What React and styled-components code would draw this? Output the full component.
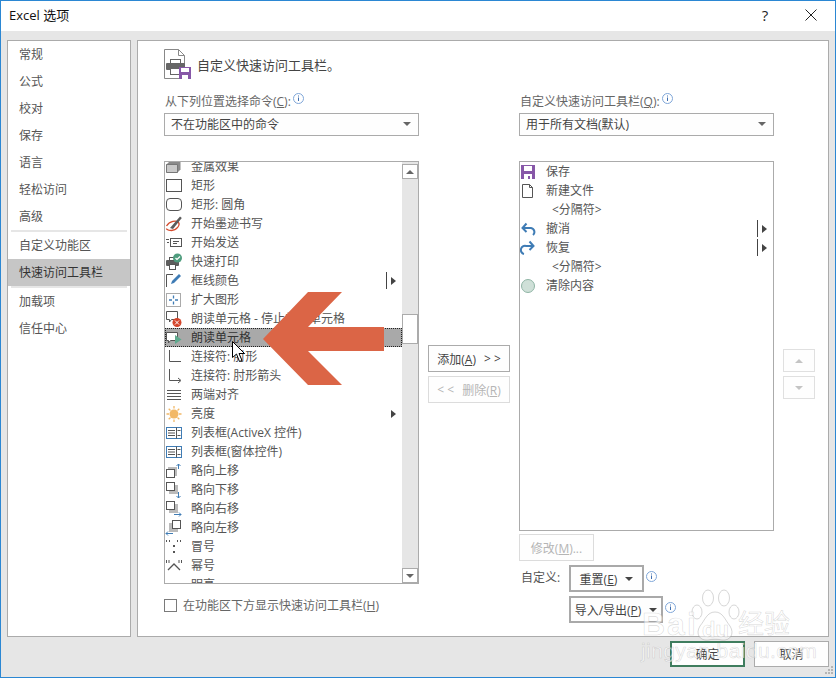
import React from "react";
import styled, { createGlobalStyle } from "styled-components";

const GlobalStyle = createGlobalStyle`
  html, body {
    margin: 0;
    padding: 0;
    background: #e6e6e6;
  }
  * {
    box-sizing: border-box;
  }
`;

const FONT = `"Open Sans", "Noto Sans CJK SC", sans-serif`;

const Dialog = styled.div`
  position: relative;
  width: 836px;
  height: 678px;
  overflow: hidden;
  display: flex;
  flex-direction: column;
  background: #e6e6e6;
  border: 1px solid #2b87d3;
  font-family: ${FONT};
  font-size: 12px;
  color: #444;
`;

const TitleBar = styled.div`
  height: 30px;
  flex: none;
  display: flex;
  align-items: center;
  background: #fff;
  padding: 0 0 3px 8px;
  font-size: 13px;
  color: #111;
`;

const TitleText = styled.div`
  flex: 1;
`;

const HelpButton = styled.div`
  width: 46px;
  text-align: center;
  font-size: 15px;
  color: #222;
`;

const CloseButton = styled.div`
  width: 46px;
  margin-right: 1px;
  display: flex;
  justify-content: center;
`;

const Body = styled.div`
  display: flex;
  gap: 6px;
  padding: 9px 0 0 6px;
`;

const Sidebar = styled.div`
  width: 124px;
  height: 597px;
  background: #fff;
  border: 1px solid #ababab;
`;

const NavItem = styled.div`
  height: 27px;
  line-height: 27px;
  padding-left: 11px;
  background: ${(p) => (p.$active ? "#c6c6c6" : "transparent")};
  color: ${(p) => (p.$active ? "#333" : "#555")};
`;

const NavRule = styled.div`
  height: 2px;
  margin: 0 3px;
  background: #e6e6e6;
`;

const Panel = styled.div`
  width: 692px;
  height: 597px;
  background: #fff;
  border: 1px solid #ababab;
  padding: 8px 0 0 26px;
`;

const Heading = styled.div`
  height: 31px;
  display: flex;
  align-items: center;
  gap: 6px;
  font-size: 13px;
  color: #444;
`;

const Columns = styled.div`
  display: flex;
  margin-top: 13px;
`;

const Column = styled.div`
  width: 255px;
  flex: none;
`;

const LabelRow = styled.div`
  height: 17px;
  line-height: 17px;
  display: flex;
  padding-left: 1px;
  color: #666;
`;

const Mnemonic = styled.span`
  text-decoration: underline;
  text-underline-offset: 1px;
`;

const InfoMark = styled.svg`
  width: 11px;
  height: 11px;
  flex: none;
  margin: ${(p) => p.$margin || "0 0 0 2px"};
`;

const Select = styled.div`
  height: 23px;
  margin-top: 3px;
  display: flex;
  align-items: center;
  justify-content: space-between;
  padding: 0 7px 1px 6px;
  background: #fefefe;
  border: 1px solid #ababab;
  color: #444;
`;

const Caret = styled.span`
  width: 0;
  height: 0;
  flex: none;
  border-left: 4px solid transparent;
  border-right: 4px solid transparent;
  border-top: 4px solid ${(p) => p.$color || "#666"};
  border-bottom: 0;
`;

const FlipCaret = styled.span`
  width: 0;
  height: 0;
  flex: none;
  border-left: 4px solid transparent;
  border-right: 4px solid transparent;
  border-bottom: 4px solid ${(p) => p.$color || "#666"};
`;

const ListBox = styled.div`
  height: ${(p) => p.$height}px;
  margin-top: 25px;
  display: flex;
  overflow: hidden;
  background: #fff;
  border: 1px solid #ababab;
`;

const ListRows = styled.div`
  flex: 1;
  min-width: 0;
  overflow: hidden;
`;

const ScrolledRows = styled.div`
  margin-top: -5px;
`;

const Row = styled.div`
  height: 19px;
  display: flex;
  align-items: center;
  padding-right: 6px;
  background: ${(p) => (p.$selected ? "#a9a9a9" : "transparent")};
  outline: ${(p) => (p.$selected ? "1px dotted #222" : "none")};
  outline-offset: -1px;
  color: ${(p) => (p.$selected ? "#333" : "#555")};
`;

const RowIcon = styled.span`
  width: 26px;
  height: 19px;
  flex: none;
  display: flex;
  align-items: center;
`;

const RowText = styled.span`
  flex: 1;
  white-space: nowrap;
  line-height: 19px;
  padding-left: ${(p) => (p.$separator ? "6px" : "0")};
`;

const SubMenu = styled.span`
  width: 10px;
  height: 17px;
  flex: none;
  display: flex;
  align-items: center;
  justify-content: flex-end;
  border-left: ${(p) => (p.$split ? "1px solid #444" : "1px solid transparent")};
`;

const SubMenuArrow = styled.span`
  width: 0;
  height: 0;
  border-top: 4px solid transparent;
  border-bottom: 4px solid transparent;
  border-left: 5px solid #444;
`;

const ScrollBar = styled.div`
  width: 16px;
  flex: none;
  display: flex;
  flex-direction: column;
  padding-top: 2px;
  background: #e6e6e6;
`;

const ScrollButton = styled.div`
  width: 16px;
  height: 15px;
  flex: none;
  display: flex;
  align-items: center;
  justify-content: center;
  background: #fff;
  border: 1px solid #ababab;
`;

const ScrollTrack = styled.div`
  flex: 1;
  padding-top: 135px;
`;

const ScrollThumb = styled.div`
  height: 30px;
  background: #fff;
  border: 1px solid #ababab;
`;

const ShowBelow = styled.div`
  display: flex;
  align-items: center;
  gap: 6px;
  margin-top: 12px;
  color: #666;
`;

const CheckBox = styled.span`
  width: 13px;
  height: 13px;
  flex: none;
  background: #fff;
  border: 1px solid #7a7a7a;
`;

const MoveColumn = styled.div`
  width: 100px;
  flex: none;
  padding: 252px 0 0 9px;
  display: flex;
  flex-direction: column;
  gap: 4px;
`;

const Button = styled.div`
  width: ${(p) => p.$width}px;
  height: ${(p) => p.$height || 27}px;
  flex: none;
  display: flex;
  align-items: center;
  justify-content: center;
  gap: 8px;
  white-space: nowrap;
  background: #fefefe;
  border: ${(p) => p.$border || 1}px solid ${(p) => p.$color || "#ababab"};
  color: ${(p) => (p.$disabled ? "#b5b5b5" : "#444")};
`;

const OrderColumn = styled.div`
  width: 32px;
  flex: none;
  margin-left: 9px;
  padding-top: 256px;
  display: flex;
  flex-direction: column;
  gap: 4px;
`;

const EditButton = styled(Button)`
  margin-top: 3px;
`;

const CustomRow = styled.div`
  display: flex;
  align-items: flex-start;
  margin-top: 4px;
  padding-left: ${(p) => p.$indent || 0}px;
`;

const CustomLabel = styled.div`
  width: 50px;
  padding-left: 2px;
  line-height: 26px;
  color: #555;
`;

const Footer = styled.div`
  display: flex;
  justify-content: flex-end;
  gap: 9px;
  padding: 4px 6px 0 0;
`;

const Grip = styled.svg`
  position: absolute;
  right: 1px;
  bottom: 1px;
`;

const Overlay = styled.svg`
  position: absolute;
  left: ${(p) => p.$x}px;
  top: ${(p) => p.$y}px;
  pointer-events: none;
`;

const Watermark = styled.div`
  position: absolute;
  left: 639px;
  top: 587px;
  width: 190px;
  height: 76px;
  pointer-events: none;
  color: rgba(255, 255, 255, 0.6);
  -webkit-text-stroke: 0.6px rgba(120, 120, 120, 0.28);
  font-family: "Liberation Sans", "Noto Sans CJK SC", sans-serif;
`;

const WatermarkBai = styled.span`
  position: absolute;
  left: 2px;
  top: 18px;
  font-size: 32px;
  font-weight: 700;
  line-height: 36px;
  letter-spacing: 2px;
`;

const WatermarkDu = styled.span`
  position: absolute;
  left: 62px;
  top: 30px;
  font-size: 22px;
  font-weight: 700;
  line-height: 24px;
`;

const WatermarkCn = styled.span`
  position: absolute;
  left: 98px;
  top: 21px;
  font-size: 26px;
  line-height: 30px;
`;

const WatermarkUrl = styled.span`
  position: absolute;
  left: 1px;
  top: 52px;
  font-size: 21px;
  line-height: 22px;
  letter-spacing: 0.4px;
  white-space: nowrap;
`;

const Ico = ({ children, w = 18, h = 18 }) => (
  <svg width={w} height={h} viewBox={`0 0 ${w} ${h}`} fill="none">
    {children}
  </svg>
);

const BLUE = "#3f7cb5";
const GREY = "#555";

const icons = {
  metal: (
    <Ico>
      <path d="M1.500 6.500l3-3h11v8l-3 3h-11z" fill="#8a8a8a" />
      <path d="M1.500 6.500h11v8h-11z" fill="#c9c9c9" stroke="#777" />
    </Ico>
  ),
  rect: (
    <Ico>
      <rect x="1.500" y="2.500" width="15" height="12" stroke={GREY} />
    </Ico>
  ),
  round: (
    <Ico>
      <rect x="1.500" y="2.500" width="15" height="12" rx="3.500" stroke={GREY} />
    </Ico>
  ),
  ink: (
    <Ico>
      <path d="M1.500 11c3-5 10-6 12-3.500s-2 8-7 8-5-2-5-2" stroke="#d4492b" strokeWidth="1.300" />
      <path d="M5 13L15 1.500l1.800 1.500L8 14z" fill="#5b5b5b" />
    </Ico>
  ),
  send: (
    <Ico>
      <rect x="5.500" y="4.500" width="11" height="8" stroke={GREY} />
      <path d="M1 5.500h3M2 8.500h2M8 7.500h6M8 9.500h4" stroke={GREY} />
    </Ico>
  ),
  print: (
    <Ico>
      <rect x="1" y="7" width="13" height="6" rx="1" fill="#5d5d5d" />
      <rect x="4.500" y="4.500" width="6" height="3" fill="#fff" stroke={GREY} />
      <rect x="4.500" y="11.500" width="6" height="5" fill="#fff" stroke={GREY} />
      <circle cx="12.500" cy="5" r="4.500" fill="#4f9d7e" />
      <path d="M10.500 5l1.500 1.500L15 3.500" stroke="#fff" strokeWidth="1.200" />
    </Ico>
  ),
  border: (
    <Ico>
      <path d="M1.500 15V2.500H8" stroke={GREY} />
      <path d="M6 12l1-3 7-7 2 2-7 7z" fill={BLUE} />
    </Ico>
  ),
  expand: (
    <Ico>
      <rect x="1.500" y="2.500" width="14" height="13" stroke={GREY} strokeDasharray="1 1" />
      <path d="M8.500 4.500v3M8.500 10.500v3M4 9h3M10 9h3" stroke={BLUE} strokeWidth="1.300" />
    </Ico>
  ),
  speakStop: (
    <Ico>
      <path d="M1.500 1.500h11v8h-6l-2 2.500v-2.500h-3z" stroke={GREY} fill="#fff" />
      <circle cx="12" cy="12.500" r="4.500" fill="#d4452b" />
      <path d="M10 10.500l4 4M14 10.500l-4 4" stroke="#fff" />
    </Ico>
  ),
  speak: (
    <Ico>
      <path d="M1.500 3.500h11v8h-7l-2 2.500v-2.500h-2z" stroke={GREY} fill="#fff" />
      <path d="M10 6l6.500 4.500L10 15z" fill="#5da98d" />
    </Ico>
  ),
  elbow: (
    <Ico>
      <path d="M4.500 2v11.500H16" stroke={GREY} />
    </Ico>
  ),
  elbowArrow: (
    <Ico>
      <path d="M4.500 2v11.500H15" stroke={GREY} />
      <path d="M13 11l3 2.500-3 2.500" stroke={GREY} />
    </Ico>
  ),
  justify: (
    <Ico>
      <path d="M2 4.500h14M2 7.500h14M2 10.500h14M2 13.500h14" stroke={GREY} />
    </Ico>
  ),
  sun: (
    <Ico>
      <circle cx="9" cy="9" r="4.500" fill="#f2b866" />
      <path
        d="M9 1v2.500M9 14.500V17M1.500 9H4M14 9h2.500M3.700 3.700l1.800 1.800M12.500 12.500l1.800 1.800M3.700 14.300l1.800-1.800M12.500 5.500l1.800-1.800"
        stroke="#f2b866"
        strokeWidth="1.300"
      />
    </Ico>
  ),
  listbox: (
    <Ico>
      <rect x="1.500" y="3.500" width="15" height="11" stroke={BLUE} />
      <path d="M11.500 3.500v11M3 6.500h7M3 9h7M3 11.500h7M12.500 6.500h3M12.500 11.500h3" stroke={GREY} />
    </Ico>
  ),
  nudgeUp: (
    <Ico>
      <rect x="3" y="5" width="9" height="9" fill="#bbb" />
      <rect x="1.500" y="7.500" width="8" height="8" fill="#fff" stroke={GREY} />
      <path d="M13.500 7V2M11.500 4l2-2 2 2" stroke={BLUE} />
    </Ico>
  ),
  nudgeDown: (
    <Ico>
      <rect x="4" y="4" width="9" height="9" fill="#bbb" />
      <rect x="1.500" y="1.500" width="8" height="8" fill="#fff" stroke={GREY} />
      <path d="M13.500 11v6M11.500 15l2 2 2-2" stroke={BLUE} />
    </Ico>
  ),
  nudgeRight: (
    <Ico>
      <rect x="4" y="4" width="9" height="9" fill="#bbb" />
      <rect x="1.500" y="1.500" width="8" height="8" fill="#fff" stroke={GREY} />
      <path d="M9 14.500h7M14 12.500l2 2-2 2" stroke={BLUE} />
    </Ico>
  ),
  nudgeLeft: (
    <Ico>
      <rect x="4" y="4" width="9" height="9" fill="#bbb" />
      <rect x="7.500" y="1.500" width="8" height="8" fill="#fff" stroke={GREY} />
      <path d="M1 14.500h7M3 12.500l-2 2 2 2" stroke={BLUE} />
    </Ico>
  ),
  colon: (
    <Ico>
      <path d="M1 3h2M4 3h2M12 3h2M15 3h2" stroke={GREY} strokeWidth="2" strokeDasharray="1 1" />
      <rect x="8" y="7" width="2" height="2" fill={GREY} />
      <rect x="8" y="13" width="2" height="2" fill={GREY} />
    </Ico>
  ),
  caret: (
    <Ico>
      <path d="M3 13l6-6 6 6" stroke={GREY} strokeWidth="1.300" />
      <path d="M1.500 3v3M4 3v3M14 3v3M16.500 3v3" stroke={GREY} />
    </Ico>
  ),
  bright: (
    <Ico>
      <path d="M1.500 15.500l5-7h10l-5 7z" fill="#ddd" stroke={GREY} />
    </Ico>
  ),
  save: (
    <Ico>
      <rect x="1" y="2" width="14" height="14" fill="#8757a8" />
      <rect x="4" y="3" width="8" height="5" fill="#fff" />
      <rect x="4" y="11" width="8" height="5" fill="#fff" />
      <rect x="8" y="13" width="2" height="3" fill="#8757a8" />
    </Ico>
  ),
  newFile: (
    <Ico>
      <path d="M2.500 2.500h7l3 3v10h-10z" stroke={GREY} fill="#fff" />
      <path d="M9.500 2.500v3h3" stroke={GREY} />
    </Ico>
  ),
  undo: (
    <Ico>
      <path d="M3 8h8a4 4 0 0 1 2 7" stroke={BLUE} strokeWidth="2" />
      <path d="M6.500 3.500L2.500 8l4 4" stroke={BLUE} strokeWidth="2" />
    </Ico>
  ),
  redo: (
    <Ico>
      <path d="M13 7H6a4 4 0 0 0-2 8" stroke={BLUE} strokeWidth="2" />
      <path d="M9.500 2.500l4 4.500-4 4" stroke={BLUE} strokeWidth="2" />
    </Ico>
  ),
  clear: (
    <Ico>
      <circle cx="8" cy="9" r="6.500" fill="#cfe0d8" stroke="#8fb5a5" />
    </Ico>
  ),
};

const commands = [
  { icon: "metal", text: "金属效果" },
  { icon: "rect", text: "矩形" },
  { icon: "round", text: "矩形: 圆角" },
  { icon: "ink", text: "开始墨迹书写" },
  { icon: "send", text: "开始发送" },
  { icon: "print", text: "快速打印" },
  { icon: "border", text: "框线颜色", sub: "split" },
  { icon: "expand", text: "扩大图形" },
  { icon: "speakStop", text: "朗读单元格 - 停止朗读单元格" },
  { icon: "speak", text: "朗读单元格", selected: true },
  { icon: "elbow", text: "连接符: 肘形" },
  { icon: "elbowArrow", text: "连接符: 肘形箭头" },
  { icon: "justify", text: "两端对齐" },
  { icon: "sun", text: "亮度", sub: "plain" },
  { icon: "listbox", text: "列表框(ActiveX 控件)" },
  { icon: "listbox", text: "列表框(窗体控件)" },
  { icon: "nudgeUp", text: "略向上移" },
  { icon: "nudgeDown", text: "略向下移" },
  { icon: "nudgeRight", text: "略向右移" },
  { icon: "nudgeLeft", text: "略向左移" },
  { icon: "colon", text: "冒号" },
  { icon: "caret", text: "幂号" },
  { icon: "bright", text: "明亮" },
];

const toolbarItems = [
  { icon: "save", text: "保存" },
  { icon: "newFile", text: "新建文件" },
  { text: "<分隔符>", separator: true },
  { icon: "undo", text: "撤消", sub: "split" },
  { icon: "redo", text: "恢复", sub: "split" },
  { text: "<分隔符>", separator: true },
  { icon: "clear", text: "清除内容" },
];

const navTop = ["常规", "公式", "校对", "保存", "语言", "轻松访问", "高级"];

const Info = ({ margin }) => (
  <InfoMark $margin={margin} viewBox="0 0 11 11" fill="none">
    <circle cx="5.500" cy="5.500" r="5" stroke="#7fa6d8" />
    <path d="M5.500 4.500v3.500M5.500 2.500v1" stroke="#3f6fb0" />
  </InfoMark>
);

const CommandRow = ({ item }) => (
  <Row $selected={item.selected}>
    <RowIcon>{icons[item.icon]}</RowIcon>
    <RowText $separator={item.separator}>{item.text}</RowText>
    {item.sub && (
      <SubMenu $split={item.sub === "split"}>
        <SubMenuArrow />
      </SubMenu>
    )}
  </Row>
);

const App = () => (
  <>
    <GlobalStyle />
    <Dialog>
      <TitleBar>
        <TitleText>Excel 选项</TitleText>
        <HelpButton>?</HelpButton>
        <CloseButton>
          <svg width="12" height="12" viewBox="0 0 12 12" fill="none">
            <path d="M0.500 0.500l11 11M11.500 0.500l-11 11" stroke="#222" />
          </svg>
        </CloseButton>
      </TitleBar>

      <Body>
        <Sidebar>
          {navTop.map((t) => (
            <NavItem key={t}>{t}</NavItem>
          ))}
          <NavRule />
          <NavItem>自定义功能区</NavItem>
          <NavItem $active>快速访问工具栏</NavItem>
          <NavRule />
          <NavItem>加载项</NavItem>
          <NavItem>信任中心</NavItem>
        </Sidebar>

        <Panel>
          <Heading>
            <svg width="27" height="31" viewBox="0 0 27 31" fill="none">
              <path d="M0.500 0.500h14l6 6v23h-20z" stroke="#888" fill="#fff" />
              <path d="M14.500 0.500v6h6" stroke="#888" />
              <rect x="2" y="14" width="19" height="7" rx="1" fill="#666" />
              <rect x="6.500" y="10.500" width="10" height="4" fill="#fff" stroke="#666" />
              <rect x="6.500" y="19.500" width="10" height="6" fill="#fff" stroke="#666" />
              <rect x="15" y="18" width="12" height="12" fill="#8757a8" />
              <rect x="17" y="19" width="8" height="4" fill="#fff" />
              <rect x="18" y="26" width="6" height="4" fill="#fff" />
            </svg>
            自定义快速访问工具栏。
          </Heading>

          <Columns>
            <Column>
              <LabelRow>
                从下列位置选择命令(<Mnemonic>C</Mnemonic>):
                <Info />
              </LabelRow>
              <Select>
                不在功能区中的命令
                <Caret />
              </Select>
              <ListBox $height={423}>
                <ListRows>
                  <ScrolledRows>
                    {commands.map((c) => (
                      <CommandRow key={c.text} item={c} />
                    ))}
                  </ScrolledRows>
                </ListRows>
                <ScrollBar>
                  <ScrollButton>
                    <FlipCaret />
                  </ScrollButton>
                  <ScrollTrack>
                    <ScrollThumb />
                  </ScrollTrack>
                  <ScrollButton>
                    <Caret />
                  </ScrollButton>
                </ScrollBar>
              </ListBox>
              <ShowBelow>
                <CheckBox />
                <span>
                  在功能区下方显示快速访问工具栏(<Mnemonic>H</Mnemonic>)
                </span>
              </ShowBelow>
            </Column>

            <MoveColumn>
              <Button $width={82}>
                <span>
                  添加(<Mnemonic>A</Mnemonic>)
                </span>
                <span>&gt; &gt;</span>
              </Button>
              <Button $width={82} $disabled $color="#dcdcdc">
                <span>&lt; &lt;</span>
                <span>
                  删除(<Mnemonic>R</Mnemonic>)
                </span>
              </Button>
            </MoveColumn>

            <Column>
              <LabelRow>
                自定义快速访问工具栏(<Mnemonic>Q</Mnemonic>):
                <Info />
              </LabelRow>
              <Select>
                用于所有文档(默认)
                <Caret />
              </Select>
              <ListBox $height={370}>
                <ListRows>
                  {toolbarItems.map((c, i) => (
                    <CommandRow key={i} item={c} />
                  ))}
                </ListRows>
              </ListBox>
              <EditButton $width={75} $disabled $color="#dcdcdc">
                <span>
                  修改(<Mnemonic>M</Mnemonic>)...
                </span>
              </EditButton>
              <CustomRow>
                <CustomLabel>自定义:</CustomLabel>
                <Button $width={75} $border={2} $color="#a9a9a9">
                  <span>
                    重置(<Mnemonic>E</Mnemonic>)
                  </span>
                  <Caret $color="#444" />
                </Button>
                <Info margin="6px 0 0 2px" />
              </CustomRow>
              <CustomRow $indent={50}>
                <Button $width={94} $border={2} $color="#a9a9a9">
                  <span>
                    导入/导出(<Mnemonic>P</Mnemonic>)
                  </span>
                  <Caret $color="#444" />
                </Button>
                <Info margin="6px 0 0 2px" />
              </CustomRow>
            </Column>

            <OrderColumn>
              <Button $width={32} $height={23} $color="#e0e0e0">
                <FlipCaret $color="#c4c4c4" />
              </Button>
              <Button $width={32} $height={23} $color="#e0e0e0">
                <Caret $color="#c4c4c4" />
              </Button>
            </OrderColumn>
          </Columns>
        </Panel>
      </Body>

      <Footer>
        <Button $width={75} $height={26} $border={2} $color="#3f7d5e">
          确定
        </Button>
        <Button $width={75} $height={26}>
          取消
        </Button>
      </Footer>

      <Overlay $x={262} $y={291} width="122" height="94" viewBox="0 0 122 94">
        <path d="M0 47L45 0H79L45 35H121V59H45L79 93H45z" fill="#db6546" />
      </Overlay>

      <Overlay $x={231} $y={340} width="14" height="22" viewBox="0 0 14 22">
        <path
          d="M0.500 0.500V16.500L4.500 13L7.500 20.500L10 19.500L7 12.500H12.500z"
          fill="#fff"
          stroke="#000"
        />
      </Overlay>

      <Watermark>
        <Overlay $x={50} $y={0} width="50" height="56" viewBox="0 0 50 56">
          <g fill="rgba(255,255,255,0.5)" stroke="rgba(120,120,120,0.3)">
            <ellipse cx="18" cy="10" rx="5.500" ry="8" />
            <ellipse cx="34" cy="10" rx="5.500" ry="8" />
            <ellipse cx="7" cy="24" rx="5" ry="7" />
            <ellipse cx="44" cy="24" rx="5" ry="7" />
            <path d="M25 24c8 0 10 8 15 14 5 8 0 15-8 14-4-1-10-1-14 0-8 1-13-6-8-14 5-6 7-14 15-14z" />
          </g>
        </Overlay>
        <WatermarkBai>Bai</WatermarkBai>
        <WatermarkDu>du</WatermarkDu>
        <WatermarkCn>经验</WatermarkCn>
        <WatermarkUrl>jingyan.baidu.com</WatermarkUrl>
      </Watermark>

      <Grip width="10" height="11" viewBox="0 0 10 11" fill="#b5b5b5">
        <rect x="7" y="1" width="2" height="2" />
        <rect x="4" y="4" width="2" height="2" />
        <rect x="7" y="4" width="2" height="2" />
        <rect x="1" y="7" width="2" height="2" />
        <rect x="4" y="7" width="2" height="2" />
        <rect x="7" y="7" width="2" height="2" />
      </Grip>
    </Dialog>
  </>
);

export default App;
